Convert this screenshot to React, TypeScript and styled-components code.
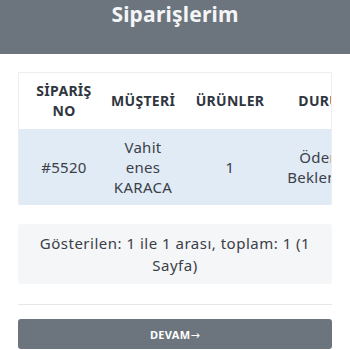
import React from 'react';
import styled, { createGlobalStyle } from 'styled-components';

const GlobalStyle = createGlobalStyle`
    body {
        margin: 0;
        background: #fff;
        font-family: 'Noto Sans', 'Open Sans', sans-serif;
        color: #343a40;
    }
`;

const columns = [
    { key: 'no', title: 'SİPARİŞ NO', width: 90, pad: 14 },
    { key: 'customer', title: 'MÜŞTERİ', width: 68, pad: 2 },
    { key: 'items', title: 'ÜRÜNLER', width: 106, pad: 2 },
    { key: 'status', title: 'DURUM', width: 86, pad: 2 },
];

const orders = [
    { id: 5520, customer: 'Vahit enes KARACA', items: 1, status: 'Ödeme Bekleniyor' },
];

const App = () => {
    return (
        <Page>
            <GlobalStyle />
            <Header>
                <Title>Siparişlerim</Title>
            </Header>
            <Content>
                <TableWrap>
                    <Table>
                        <colgroup>
                            {columns.map((col) => (
                                <col key={col.key} style={{ width: col.width }} />
                            ))}
                        </colgroup>
                        <thead>
                            <tr>
                                {columns.map((col) => (
                                    <Th key={col.key} $pad={col.pad}>{col.title}</Th>
                                ))}
                            </tr>
                        </thead>
                        <tbody>
                            {orders.map((order) => (
                                <Row key={order.id}>
                                    <Td>#{order.id}</Td>
                                    <Td>{order.customer}</Td>
                                    <Td>{order.items}</Td>
                                    <Td>{order.status}</Td>
                                </Row>
                            ))}
                        </tbody>
                    </Table>
                </TableWrap>
                <Summary>Gösterilen: 1 ile 1 arası, toplam: 1 (1 Sayfa)</Summary>
                <Divider />
                <Button>
                    DEVAM<Arrow>&rarr;</Arrow>
                </Button>
            </Content>
        </Page>
    );
};

const Page = styled.div`
    width: 350px;
    min-height: 350px;
`;

const Header = styled.header`
    height: 54px;
    background-color: #6c757d;
    display: flex;
    justify-content: center;
    align-items: flex-start;
`;

const Title = styled.h1`
    margin: 0;
    font-size: 21px;
    line-height: 28px;
    font-weight: 700;
    color: #f4f5f6;
    letter-spacing: 0.2px;
`;

const Content = styled.main`
    display: flex;
    flex-direction: column;
    padding: 18px 18px 0;
`;

const TableWrap = styled.div`
    overflow: hidden;
    border: 1px solid #eceef0;
    border-bottom: none;
`;

const Table = styled.table`
    table-layout: fixed;
    width: 350px;
    border-collapse: collapse;
    text-align: center;
`;

const Th = styled.th<{ $pad: number }>`
    padding: 8px ${(p) => p.$pad}px;
    font-size: 14px;
    line-height: 20px;
    font-weight: 700;
    color: #2f3640;
    vertical-align: middle;
    letter-spacing: 0.3px;
`;

const Row = styled.tr`
    background-color: #e1ebf6;
`;

const Td = styled.td`
    padding: 8px 4px;
    font-size: 15px;
    line-height: 20px;
    color: #3a4048;
    vertical-align: middle;
    letter-spacing: 0.3px;
`;

const Summary = styled.div`
    margin-top: 19px;
    padding: 8px 14px;
    background-color: #f5f6f7;
    border-radius: 3px;
    font-size: 15px;
    line-height: 22px;
    text-align: center;
    color: #3a4048;
    letter-spacing: 0.5px;
`;

const Divider = styled.hr`
    margin: 20px 0 0;
    border: none;
    border-top: 1px solid #e6e7e8;
`;

const Button = styled.button`
    margin-top: 14px;
    height: 30px;
    border: none;
    border-radius: 3px;
    background-color: #6c757d;
    color: #fff;
    font-family: 'Noto Sans', sans-serif;
    font-size: 11px;
    font-weight: 700;
    letter-spacing: 0.3px;
    cursor: pointer;
`;

const Arrow = styled.span`
    font-family: 'DejaVu Sans', sans-serif;
    font-size: 11px;
    font-weight: 400;
`;

export default App;
